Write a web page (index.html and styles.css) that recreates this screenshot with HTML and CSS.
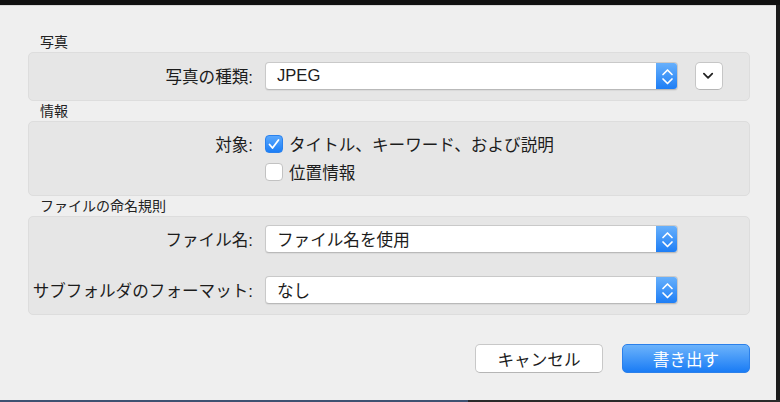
FILE: index.html
```html
<!DOCTYPE html>
<html lang="ja">
<head>
<meta charset="utf-8">
<link rel="stylesheet" href="styles.css">
</head>
<body>
<div class="topbar"></div>
<div class="dialog">
  <div class="section-label">写真</div>
  <div class="box box-photo">
    <div class="row">
      <span class="label">写真の種類:</span>
      <div class="popup">
        <span class="popup-text">JPEG</span>
        <span class="popup-arrows"><svg viewBox="0 0 21 27" width="21" height="27"><path d="M6 11.5 L10.5 7 L15 11.5 M6 16 L10.5 20.5 L15 16" fill="none" stroke="#fff" stroke-width="1.7" stroke-linecap="round" stroke-linejoin="round"/></svg></span>
      </div>
      <button class="disclosure"><svg viewBox="0 0 28 28" width="26" height="26"><path d="M8.5 11.5 L13 16 L17.5 11.5" fill="none" stroke="#222" stroke-width="1.9" stroke-linecap="round" stroke-linejoin="round"/></svg></button>
    </div>
  </div>

  <div class="section-label">情報</div>
  <div class="box box-info">
    <div class="grid">
      <span class="label">対象:</span>
      <label class="check"><span class="cb cb-on"><svg viewBox="0 0 18 18" width="18" height="18"><path d="M4.5 9.5 L7.5 13 L13.5 5" fill="none" stroke="#fff" stroke-width="1.8" stroke-linecap="round" stroke-linejoin="round"/></svg></span><span>タイトル、キーワード、および説明</span></label>
      <span class="label"></span>
      <label class="check"><span class="cb"></span><span>位置情報</span></label>
    </div>
  </div>

  <div class="section-label">ファイルの命名規則</div>
  <div class="box box-naming">
    <div class="row">
      <span class="label">ファイル名:</span>
      <div class="popup">
        <span class="popup-text">ファイル名を使用</span>
        <span class="popup-arrows"><svg viewBox="0 0 21 27" width="21" height="27"><path d="M6 11.5 L10.5 7 L15 11.5 M6 16 L10.5 20.5 L15 16" fill="none" stroke="#fff" stroke-width="1.7" stroke-linecap="round" stroke-linejoin="round"/></svg></span>
      </div>
    </div>
    <div class="row">
      <span class="label">サブフォルダのフォーマット:</span>
      <div class="popup">
        <span class="popup-text">なし</span>
        <span class="popup-arrows"><svg viewBox="0 0 21 27" width="21" height="27"><path d="M6 11.5 L10.5 7 L15 11.5 M6 16 L10.5 20.5 L15 16" fill="none" stroke="#fff" stroke-width="1.7" stroke-linecap="round" stroke-linejoin="round"/></svg></span>
      </div>
    </div>
  </div>

  <div class="buttons">
    <button class="btn">キャンセル</button>
    <button class="btn btn-primary">書き出す</button>
  </div>
</div>
<div class="bottombar"></div>
</body>
</html>
```
FILE: styles.css
```css
* { box-sizing: border-box; }
html, body { margin: 0; padding: 0; }
body {
  width: 780px;
  height: 402px;
  background: #1b1b1b;
  font-family: "Liberation Sans", "Noto Sans CJK JP", sans-serif;
  color: #1c1c1c;
  overflow: hidden;
}
.topbar {
  height: 5px;
  background: #111;
}
.dialog {
  width: 776px;
  height: 395px;
  background: #efefef;
  border-top: 1px solid #d8d8d8;
  padding-top: 26px;
}
.bottombar {
  height: 2px;
  background: linear-gradient(to right, #3e5272 0, #3e5272 60%, #2a2a2a 60%);
}
.section-label {
  font-size: 14px;
  line-height: 20px;
  height: 20px;
  padding-left: 40px;
  color: #222;
}
.box {
  margin-left: 28px;
  width: 722px;
  background: #e6e6e6;
  border: 1px solid #dddddd;
  border-radius: 5px;
}
.box-photo { padding: 9px 0 10px; }
.box-info { padding: 8px 0 9px; }
.box-naming {
  padding: 8px 0 10px;
  display: flex;
  flex-direction: column;
  gap: 23px;
}
.row {
  display: flex;
  align-items: center;
  gap: 12px;
}
.label {
  width: 224px;
  text-align: right;
  font-size: 16.6px;
  white-space: nowrap;
}
.popup {
  width: 413px;
  height: 28px;
  background: #fff;
  border: 1px solid #c9c9c9;
  border-bottom-color: #b9b9b9;
  border-radius: 4px;
  box-shadow: 0 1px 1px rgba(0,0,0,0.06);
  display: flex;
  align-items: center;
  justify-content: space-between;
  overflow: hidden;
}
.popup-text {
  padding-left: 11px;
  font-size: 16.6px;
}
.popup-arrows {
  width: 22px;
  height: 28px;
  margin-right: -1px;
  background: linear-gradient(#6ab2fc, #1b7cf5);
  border-radius: 0 4px 4px 0;
  display: flex;
  align-items: center;
  justify-content: center;
}
.popup-arrows svg { display: block; }
.disclosure {
  margin-left: 5px;
  width: 28px;
  height: 28px;
  padding: 0;
  background: #fff;
  border: 1px solid #c6c6c6;
  border-bottom-color: #b5b5b5;
  border-radius: 5px;
  display: flex;
  align-items: center;
  justify-content: center;
}
.grid {
  display: grid;
  grid-template-columns: 224px 413px;
  grid-auto-rows: 28px;
  column-gap: 12px;
  align-items: center;
}
.check {
  display: flex;
  align-items: center;
  gap: 6px;
  font-size: 16.6px;
}
.cb {
  width: 18px;
  height: 18px;
  border-radius: 4px;
  background: #fff;
  border: 1px solid #c2c2c2;
  display: flex;
  align-items: center;
  justify-content: center;
}
.cb-on {
  background: linear-gradient(#5aa8fd, #1c7ef6);
  border-color: #2a82ee;
}
.cb-on svg { display: block; margin: -1px; }
.buttons {
  margin-top: 29px;
  width: 750px;
  display: flex;
  justify-content: flex-end;
  gap: 19px;
}
.btn {
  width: 128px;
  height: 29px;
  padding: 0;
  font-family: "Liberation Sans", "Noto Sans CJK JP", sans-serif;
  font-size: 16.6px;
  color: #1c1c1c;
  background: #fff;
  border: 1px solid #c8c8c8;
  border-bottom-color: #b5b5b5;
  border-radius: 5px;
}
.btn-primary {
  color: #fff;
  background: linear-gradient(#6cb3fb, #1a7cf5);
  border-color: #2b80ea;
}
```
